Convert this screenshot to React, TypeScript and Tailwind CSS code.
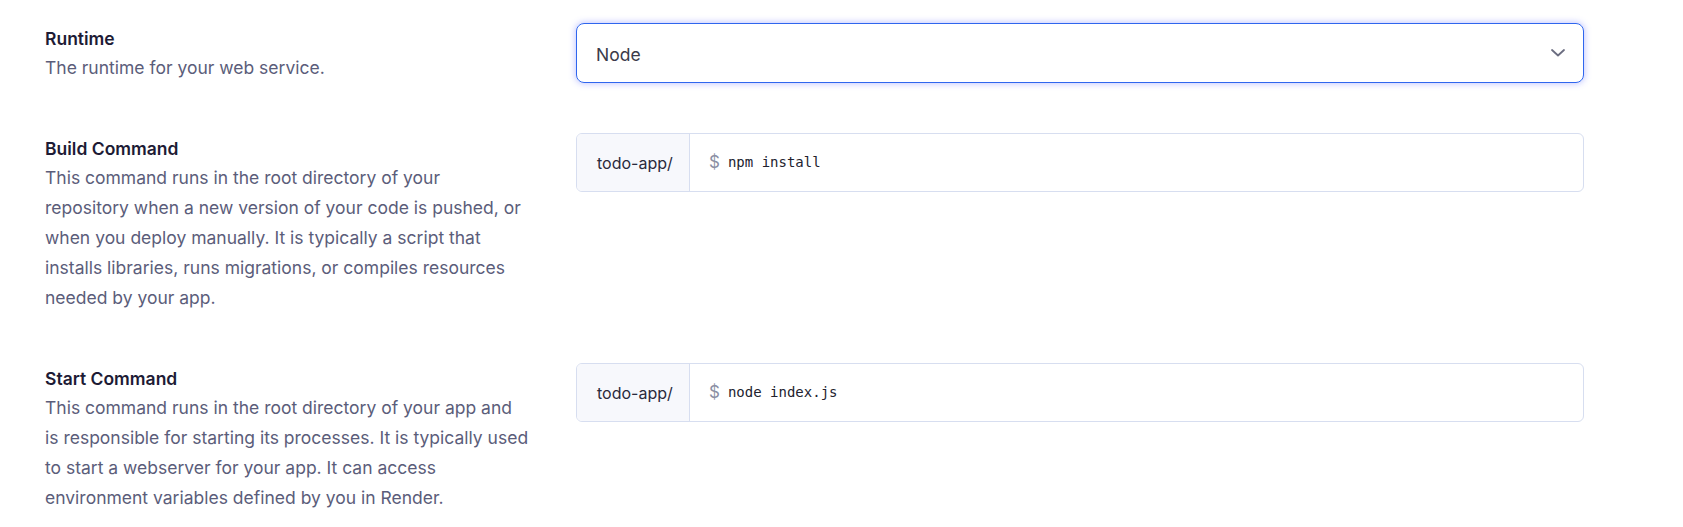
import React from "react";

const font = { fontFamily: "Inter, 'Noto Sans', sans-serif" };

function Label({ title, lines }: { title: string; lines: string[] }) {
  return (
    <div className="pt-[2px]">
      <div className="text-[17.5px] leading-[28px] font-semibold text-[#1d1b35]">{title}</div>
      <div className="text-[17.5px] leading-[30px] text-[#5b5d7a]">
        {lines.map((l, i) => (
          <div key={i} className="whitespace-nowrap">{l}</div>
        ))}
      </div>
    </div>
  );
}

function CommandBox({ cmd }: { cmd: string }) {
  return (
    <div className="flex h-[59px] rounded-[6px] border border-[#d7def0] overflow-hidden">
      <div className="flex shrink-0 items-center whitespace-nowrap pl-[20px] w-[113px] bg-[#f7f8fc] border-r border-[#d7def0] text-[16px] text-[#2a2a3c]">
        todo-app/
      </div>
      <div className="flex items-center pl-[19px]">
        <span className="text-[17px] text-[#8b90a4] mr-[8px]">$</span>
        <span className="text-[14px] text-[#22222e]" style={{ fontFamily: "'DejaVu Sans Mono', monospace" }}>{cmd}</span>
      </div>
    </div>
  );
}

export default function App() {
  return (
    <div className="bg-white w-[1683px] h-[527px] pl-[45px] pt-[23px]" style={font}>
      <div className="grid grid-cols-[478px_1008px] gap-x-[53px]">
        <Label title="Runtime" lines={["The runtime for your web service."]} />
        <div>
          <div className="flex items-center justify-between h-[60px] rounded-[8px] border border-[#2f66ee] shadow-[0_0_6px_1px_rgba(90,100,255,0.35)] pl-[19px] pr-[18px]">
            <span className="pt-[4px] text-[17.5px] text-[#3b3b4a]">Node</span>
            <svg width="14" height="8" viewBox="0 0 14 8" fill="none">
              <path d="M1 1l6 5.5L13 1" stroke="#6b6d80" strokeWidth="1.8" strokeLinecap="round" strokeLinejoin="round" />
            </svg>
          </div>
        </div>

        <div className="h-[50px] col-span-2" />

        <Label
          title="Build Command"
          lines={[
            "This command runs in the root directory of your",
            "repository when a new version of your code is pushed, or",
            "when you deploy manually. It is typically a script that",
            "installs libraries, runs migrations, or compiles resources",
            "needed by your app.",
          ]}
        />
        <div>
          <CommandBox cmd="npm install" />
        </div>

        <div className="h-[50px] col-span-2" />

        <Label
          title="Start Command"
          lines={[
            "This command runs in the root directory of your app and",
            "is responsible for starting its processes. It is typically used",
            "to start a webserver for your app. It can access",
            "environment variables defined by you in Render.",
          ]}
        />
        <div>
          <CommandBox cmd="node index.js" />
        </div>
      </div>
    </div>
  );
}
